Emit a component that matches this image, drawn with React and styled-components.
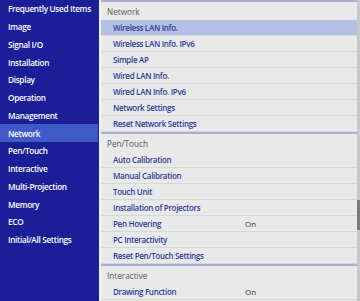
import React from "react";
import styled, { createGlobalStyle } from "styled-components";

const Global = createGlobalStyle`
  html, body { margin: 0; padding: 0; background: #e8e8e8; }
  body { font-family: "Open Sans", "Noto Sans", sans-serif; }
  #root { width: 360px; height: 301px; overflow: hidden; }
`;

const Screen = styled.div`
  display: flex;
  width: 360px;
  height: 301px;
  overflow: hidden;
`;

const Sidebar = styled.div`
  width: 99px;
  flex: none;
  background: #1b1f97;
  display: flex;
  flex-direction: column;
`;

const SideItem = styled.div`
  height: 17.75px;
  flex: none;
  display: flex;
  align-items: center;
  padding-left: 8px;
  font-size: 8.2px;
  font-weight: 600;
  letter-spacing: -0.3px;
  color: #ffffff;
  white-space: nowrap;
  background: ${(p) => (p.$active ? "#3f5ac6" : "transparent")};
  margin-right: ${(p) => (p.$active ? "1px" : "0")};
`;

const Divider = styled.div`
  width: 2px;
  flex: none;
  background: #f2f2f2;
`;

const Panel = styled.div`
  flex: 1;
  display: flex;
  background: #e8e8e8;
  min-width: 0;
`;

const List = styled.div`
  flex: 1;
  display: flex;
  flex-direction: column;
  min-width: 0;
`;

const Header = styled.div`
  height: 18px;
  flex: none;
  border-top: 2px solid #aab1d9;
  display: flex;
  align-items: center;
  padding-left: 6px;
  font-size: 8.2px;
  color: #5a5a5a;
  background: #e9e9e9;
`;

const Row = styled.div`
  height: 15px;
  flex: none;
  border-bottom: 1px solid #d7d7d7;
  display: flex;
  align-items: center;
  padding-left: 12px;
  font-size: 8px;
  font-weight: 600;
  letter-spacing: -0.3px;
  color: #2c3c9c;
  background: ${(p) => (p.$selected ? "#b4c0e4" : "#e9e9e9")};
`;

const Label = styled.span`
  width: 132px;
  flex: none;
  white-space: nowrap;
`;

const Value = styled.span`
  color: #333333;
  font-weight: 400;
  letter-spacing: 0;
`;

const Scrollbar = styled.div`
  width: 3px;
  flex: none;
  background: #c9c9c9;
  display: flex;
  flex-direction: column;
  padding-top: 200px;
`;

const Thumb = styled.div`
  height: 30px;
  background: #7c7c7c;
`;

const sideItems = [
  "Frequently Used Items",
  "Image",
  "Signal I/O",
  "Installation",
  "Display",
  "Operation",
  "Management",
  "Network",
  "Pen/Touch",
  "Interactive",
  "Multi-Projection",
  "Memory",
  "ECO",
  "Initial/All Settings",
];

const sections = [
  {
    title: "Network",
    items: [
      ["Wireless LAN Info.", "", true],
      ["Wireless LAN Info. IPv6"],
      ["Simple AP"],
      ["Wired LAN Info."],
      ["Wired LAN Info. IPv6"],
      ["Network Settings"],
      ["Reset Network Settings"],
    ],
  },
  {
    title: "Pen/Touch",
    items: [
      ["Auto Calibration"],
      ["Manual Calibration"],
      ["Touch Unit"],
      ["Installation of Projectors"],
      ["Pen Hovering", "On"],
      ["PC Interactivity"],
      ["Reset Pen/Touch Settings"],
    ],
  },
  {
    title: "Interactive",
    items: [["Drawing Function", "On"]],
  },
];

export default function App() {
  return (
    <>
      <Global />
      <Screen>
        <Sidebar>
          {sideItems.map((s) => (
            <SideItem key={s} $active={s === "Network"}>
              {s}
            </SideItem>
          ))}
        </Sidebar>
        <Divider />
        <Panel>
          <List>
            {sections.map((sec) => (
              <React.Fragment key={sec.title}>
                <Header>{sec.title}</Header>
                {sec.items.map(([label, value, sel]) => (
                  <Row key={label} $selected={!!sel}>
                    <Label>{label}</Label>
                    {value ? <Value>{value}</Value> : null}
                  </Row>
                ))}
              </React.Fragment>
            ))}
          </List>
          <Scrollbar>
            <Thumb />
          </Scrollbar>
        </Panel>
      </Screen>
    </>
  );
}
